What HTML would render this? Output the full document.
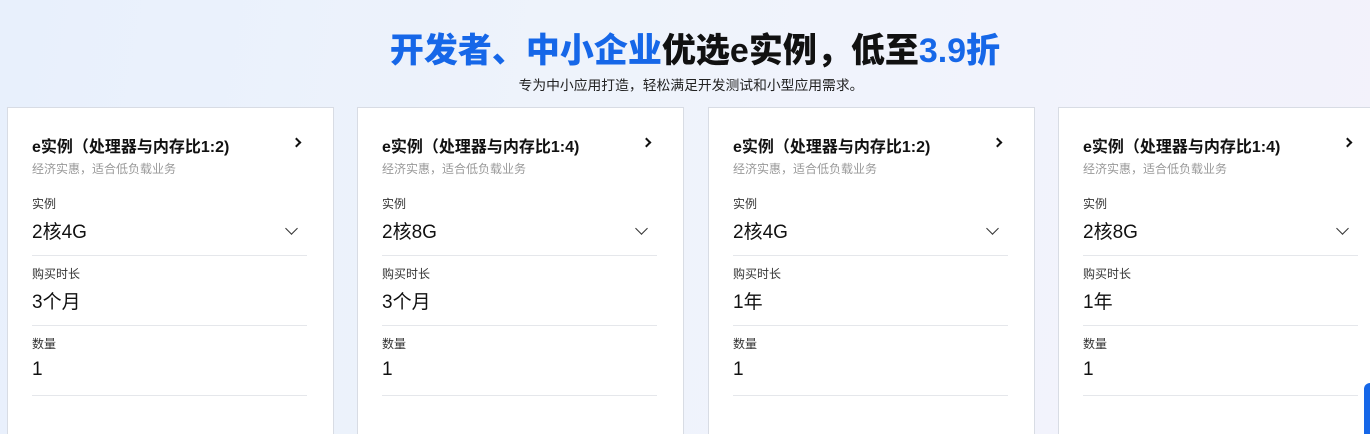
<!DOCTYPE html>
<html><head><meta charset="utf-8"><style>
*{margin:0;padding:0;box-sizing:border-box}
html,body{width:1370px;height:434px;overflow:hidden}
body{font-family:"Liberation Sans","Noto Sans CJK SC",sans-serif;background:linear-gradient(100deg,#e8f0fc 0%,#eef3fb 40%,#f1f3fc 70%,#f3f2fb 100%);position:relative}
h1{position:absolute;top:23px;left:0;width:1390px;text-align:center;font-size:34px;font-weight:900;color:#111;white-space:nowrap}
h1 .b{color:#1667e8}
.sub{position:absolute;top:74px;left:0;width:1382px;text-align:center;font-size:13.8px;color:#222}
.card{position:absolute;top:107px;width:327px;height:327px;background:#fff;border:1px solid #d8dce4;border-bottom:none}
.t{position:absolute;top:25px;left:24px;font-size:16px;font-weight:bold;color:#111;white-space:nowrap}
.arr{position:absolute;top:31px;right:33px;width:7px;height:7px;border-right:2px solid #111;border-top:2px solid #111;transform:rotate(45deg)}
.d{position:absolute;top:52px;left:24px;font-size:12px;color:#999}
.row{position:absolute;left:24px;width:275px;height:70px;border-bottom:1px solid #e5e7eb}
.row .l{position:absolute;top:9px;font-size:12px;color:#333}
.row .v{position:absolute;top:31px;font-size:19px;color:#111}
.r3 .v{top:33px}
.chev{position:absolute;right:11px;top:38px;width:9px;height:9px;border-right:1.3px solid #333;border-bottom:1.3px solid #333;transform:rotate(45deg)}
</style></head><body>
<h1><span class="b">开发者、中小企业</span>优选e实例，低至<span class="b">3.9折</span></h1>
<div class="sub">专为中小应用打造，轻松满足开发测试和小型应用需求。</div>

<div class="card" style="left:7px"><div class="t">e实例（处理器与内存比1:2)</div><div class="arr"></div><div class="d">经济实惠，适合低负载业务</div>
<div class="row" style="top:78px"><div class="l">实例</div><div class="v">2核4G</div><div class="chev"></div></div>
<div class="row" style="top:148px"><div class="l">购买时长</div><div class="v">3个月</div></div>
<div class="row r3" style="top:218px"><div class="l">数量</div><div class="v">1</div></div></div>

<div class="card" style="left:357px"><div class="t">e实例（处理器与内存比1:4)</div><div class="arr"></div><div class="d">经济实惠，适合低负载业务</div>
<div class="row" style="top:78px"><div class="l">实例</div><div class="v">2核8G</div><div class="chev"></div></div>
<div class="row" style="top:148px"><div class="l">购买时长</div><div class="v">3个月</div></div>
<div class="row r3" style="top:218px"><div class="l">数量</div><div class="v">1</div></div></div>

<div class="card" style="left:708px"><div class="t">e实例（处理器与内存比1:2)</div><div class="arr"></div><div class="d">经济实惠，适合低负载业务</div>
<div class="row" style="top:78px"><div class="l">实例</div><div class="v">2核4G</div><div class="chev"></div></div>
<div class="row" style="top:148px"><div class="l">购买时长</div><div class="v">1年</div></div>
<div class="row r3" style="top:218px"><div class="l">数量</div><div class="v">1</div></div></div>

<div class="card" style="left:1058px"><div class="t">e实例（处理器与内存比1:4)</div><div class="arr"></div><div class="d">经济实惠，适合低负载业务</div>
<div class="row" style="top:78px"><div class="l">实例</div><div class="v">2核8G</div><div class="chev"></div></div>
<div class="row" style="top:148px"><div class="l">购买时长</div><div class="v">1年</div></div>
<div class="row r3" style="top:218px"><div class="l">数量</div><div class="v">1</div></div></div>

<div style="position:absolute;left:1364px;top:383px;width:6px;height:51px;background:#1667e8;border-radius:6px 0 0 0"></div>
</body></html>
